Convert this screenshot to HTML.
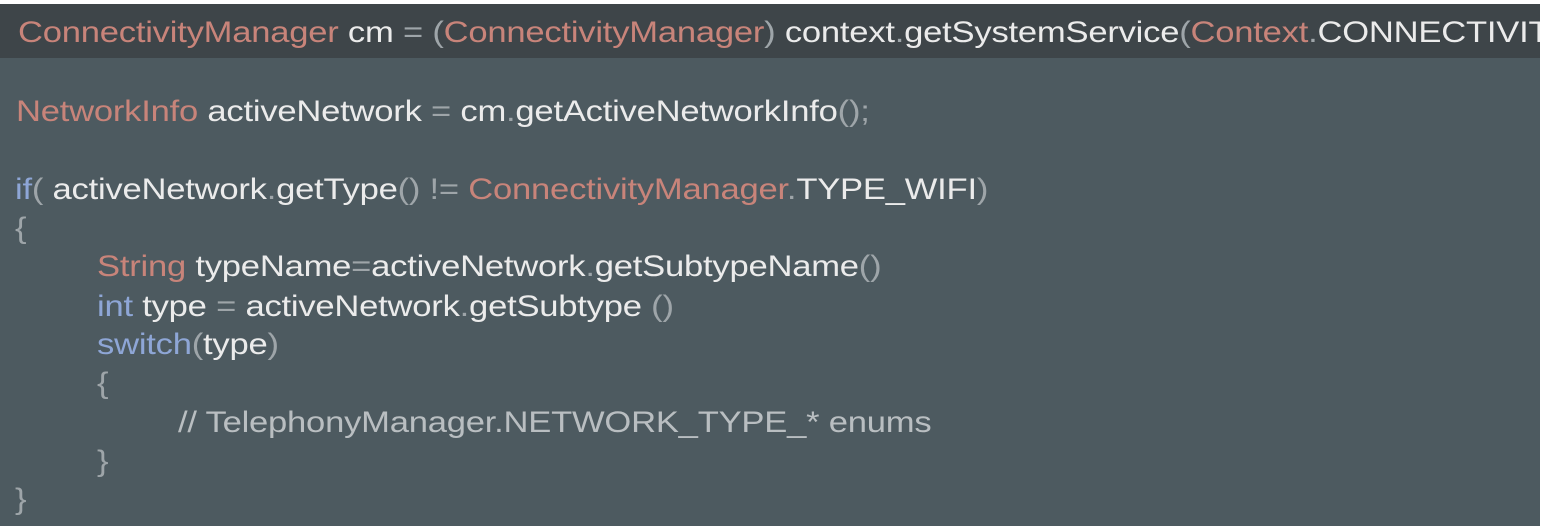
<!DOCTYPE html>
<html><head><meta charset="utf-8"><style>
html,body{margin:0;padding:0;width:1544px;height:526px;overflow:hidden;background:#fff}
#c{position:absolute;left:0;top:4px;width:1540px;height:522px;background:#4d5a60;overflow:hidden}
#h{position:absolute;left:0;top:0;width:1540px;height:54px;background:#3e4549}
.l{position:absolute;white-space:pre;font-family:"Liberation Sans",sans-serif;font-size:30px;line-height:30px;color:#ebebeb;letter-spacing:-0.2px;transform:scaleX(1.153);transform-origin:0 0}
.r{color:#c8847a}.b{color:#8ea6d6}.g{color:#9ea5a9}.cm{color:#b9bec1}
</style></head><body>
<div id="c"><div id="h"></div>
<div class="l" style="left:18px;top:14px"><span class="r">ConnectivityManager</span> cm <span class="g">= (</span><span class="r">ConnectivityManager</span><span class="g">)</span> context<span class="g">.</span>getSystemService<span class="g">(</span><span class="r">Context</span><span class="g">.</span>CONNECTIVITY_SERVICE<span class="g">);</span></div>
<div class="l" style="left:16px;top:93px"><span class="r">NetworkInfo</span> activeNetwork <span class="g">=</span> cm<span class="g">.</span>getActiveNetworkInfo<span class="g">();</span></div>
<div class="l" style="left:15px;top:171px"><span class="b">if</span><span class="g">(</span> activeNetwork<span class="g">.</span>getType<span class="g">() !=</span> <span class="r">ConnectivityManager</span><span class="g">.</span>TYPE_WIFI<span class="g">)</span></div>
<div class="l g" style="left:15px;top:210px">{</div>
<div class="l" style="left:97px;top:248px"><span class="r">String</span> typeName<span class="g">=</span>activeNetwork<span class="g">.</span>getSubtypeName<span class="g">()</span></div>
<div class="l" style="left:97px;top:288px"><span class="b">int</span> type <span class="g">=</span> activeNetwork<span class="g">.</span>getSubtype <span class="g">()</span></div>
<div class="l" style="left:97px;top:326px"><span class="b">switch</span><span class="g">(</span>type<span class="g">)</span></div>
<div class="l g" style="left:97px;top:365px">{</div>
<div class="l cm" style="left:178px;top:404px">// TelephonyManager.NETWORK_TYPE_* enums</div>
<div class="l g" style="left:97px;top:443px">}</div>
<div class="l g" style="left:15px;top:481px">}</div>
</div>
</body></html>
